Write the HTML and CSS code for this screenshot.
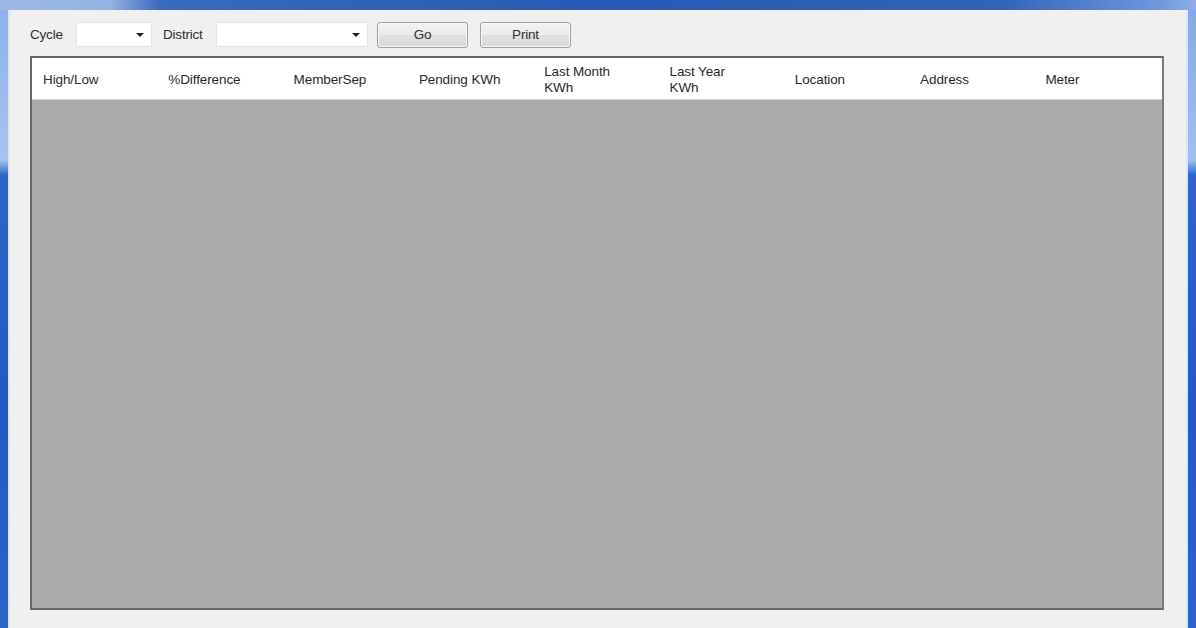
FILE: index.html
```html
<!DOCTYPE html>
<html>
<head>
<meta charset="utf-8">
<link rel="stylesheet" href="styles.css">
</head>
<body>
<div class="app">
  <div class="titlebar"></div>
  <div class="middle">
    <div class="side side-left"></div>
    <div class="client">
      <div class="toolbar">
        <span class="label label-cycle">Cycle</span>
        <div class="combo combo-cycle"><span class="arrow"></span></div>
        <span class="label label-district">District</span>
        <div class="combo combo-district"><span class="arrow"></span></div>
        <button class="btn btn-go">Go</button>
        <button class="btn btn-print">Print</button>
      </div>
      <div class="grid">
        <div class="grid-header">
          <div class="col">High/Low</div>
          <div class="col">%Difference</div>
          <div class="col">MemberSep</div>
          <div class="col">Pending KWh</div>
          <div class="col two">Last Month<br>KWh</div>
          <div class="col two">Last Year<br>KWh</div>
          <div class="col">Location</div>
          <div class="col">Address</div>
          <div class="col">Meter</div>
        </div>
        <div class="grid-body"></div>
      </div>
    </div>
    <div class="side side-right"></div>
  </div>
</div>
</body>
</html>
```
FILE: styles.css
```css
html, body {
  margin: 0;
  padding: 0;
}
body {
  width: 1196px;
  height: 628px;
  overflow: hidden;
  font-family: "Liberation Sans", Arial, sans-serif;
  color: #262626;
}
.app {
  display: flex;
  flex-direction: column;
  width: 1196px;
  height: 628px;
}
.titlebar {
  height: 10px;
  flex: none;
  background: linear-gradient(to right, #9db8e4 0, #95b2e2 110px, #3b68c0 160px, #2a58b4 600px, #3262bc 1000px, #6f98dc 1160px, #8fb0e6 1196px);
}
.middle {
  flex: 1;
  display: flex;
}
.side {
  width: 10px;
  flex: none;
}
.side-left {
  background: linear-gradient(to bottom, #8eb1ea 0, #a6c4f0 150px, #2d66c8 165px, #1f5bc2 400px, #2a66c8 618px);
  box-shadow: inset -2px 0 0 #d8e6f8;
}
.side-right {
  background: linear-gradient(to bottom, #86a9e6 0, #a2c0ee 150px, #2d66c8 165px, #1f5bc2 400px, #2a66c8 618px);
  box-shadow: inset 2px 0 0 #d8e6f8;
}
.client {
  flex: 1;
  background: #f0f0f0;
  padding: 11px 0 0 20px;
  display: flex;
  flex-direction: column;
}
.toolbar {
  display: flex;
  align-items: center;
  height: 27px;
}
.label {
  font-size: 13.5px;
  letter-spacing: -0.2px;
  color: #2e2e2e;
}
.label-cycle {
  width: 46px;
}
.label-district {
  width: 53px;
  margin-left: 11px;
}
.combo {
  position: relative;
  height: 25px;
  background: #ffffff;
  border: 1px solid #e4e4e4;
  box-sizing: border-box;
}
.combo-cycle {
  width: 76px;
}
.combo-district {
  width: 152px;
}
.arrow {
  position: absolute;
  right: 7px;
  top: 10px;
  width: 0;
  height: 0;
  border-left: 4px solid transparent;
  border-right: 4px solid transparent;
  border-top: 4px solid #202020;
}
.btn {
  height: 26px;
  width: 91px;
  border: 1px solid #a0a0a0;
  border-radius: 3px;
  background: linear-gradient(to bottom, #f3f3f3 0, #ebebeb 50%, #e0e0e0 51%, #d9d9d9 100%);
  box-shadow: inset 0 0 0 1px #f8f8f8;
  font-family: "Liberation Sans", Arial, sans-serif;
  font-size: 13.5px;
  letter-spacing: -0.2px;
  color: #2e2e2e;
  padding: 0;
}
.btn-go {
  margin-left: 9px;
}
.btn-print {
  margin-left: 12px;
}
.grid {
  margin-top: 8px;
  width: 1134px;
  height: 554px;
  box-sizing: border-box;
  border: 2px solid #666666;
  border-right-color: #7a7a7a;
  display: flex;
  flex-direction: column;
}
.grid-header {
  height: 41px;
  flex: none;
  background: #ffffff;
  border-bottom: 1px solid #d2d2d2;
  box-shadow: 0 1px 0 #c4c4c4;
  display: grid;
  grid-template-columns: repeat(9, 125.3px);
  align-items: center;
}
.col {
  padding-left: 11px;
  padding-top: 3px;
  font-size: 13.5px;
  letter-spacing: -0.1px;
  line-height: 16px;
  color: #2a2a2a;
  white-space: nowrap;
}
.col.two {
  padding-top: 3px;
}
.grid-body {
  flex: 1;
  background: #ababab;
}
```
